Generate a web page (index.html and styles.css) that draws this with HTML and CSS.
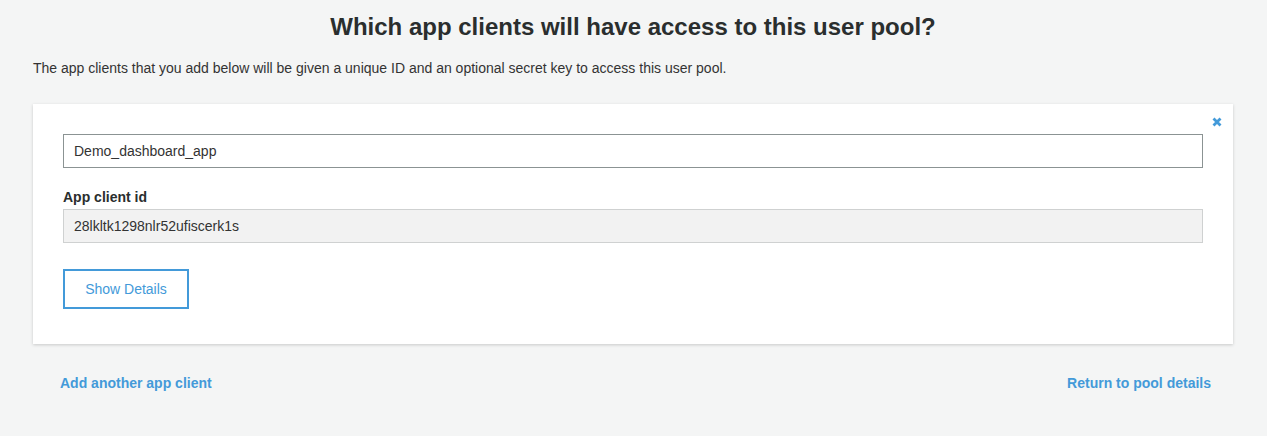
FILE: index.html
```html
<!DOCTYPE html>
<html>
<head>
<meta charset="utf-8">
<link rel="stylesheet" href="styles.css">
</head>
<body>
<div class="page">
  <h1 class="title">Which app clients will have access to this user pool?</h1>
  <p class="intro">The app clients that you add below will be given a unique ID and an optional secret key to access this user pool.</p>
  <div class="card">
    <button class="close" aria-label="Remove">
      <svg width="10" height="10" viewBox="0 0 10 10"><path d="M1.5 1.5 L8.5 8.5 M8.5 1.5 L1.5 8.5" stroke="#439ad9" stroke-width="2.8" stroke-linecap="butt"/></svg>
    </button>
    <input class="field" type="text" value="Demo_dashboard_app">
    <label class="label">App client id</label>
    <input class="field readonly" type="text" value="28lkltk1298nlr52ufiscerk1s" readonly>
    <button class="btn">Show Details</button>
  </div>
  <div class="links">
    <a class="link" href="#">Add another app client</a>
    <a class="link" href="#">Return to pool details</a>
  </div>
</div>
</body>
</html>
```
FILE: styles.css
```css
html, body {
  margin: 0;
  padding: 0;
  background: #f4f5f5;
  font-family: "Liberation Sans", Arial, sans-serif;
  color: #333;
}
.page {
  padding: 0 34px 0 33px;
}
.title {
  margin: 0;
  padding-top: 13px;
  text-align: center;
  font-size: 24px;
  line-height: 28px;
  font-weight: bold;
  color: #2a2e2e;
}
.intro {
  margin: 19px 0 0;
  font-size: 14px;
  line-height: 16px;
  color: #333;
}
.card {
  position: relative;
  margin-top: 28px;
  background: #fff;
  box-shadow: 0 1px 3px rgba(0,0,0,0.18);
  padding: 30px 30px 35px;
  display: flex;
  flex-direction: column;
  align-items: flex-start;
}
.close {
  position: absolute;
  top: 13px;
  right: 11px;
  border: 0;
  background: none;
  padding: 0;
  width: 10px;
  height: 10px;
  cursor: pointer;
}
.close svg { display: block; }
.field {
  box-sizing: border-box;
  width: 100%;
  height: 34px;
  margin: 0;
  border: 1px solid #8b9393;
  padding: 0 10px;
  font-family: "Liberation Sans", Arial, sans-serif;
  font-size: 14px;
  color: #333;
  background: #fff;
  outline: none;
}
.field.readonly {
  background: #f2f2f2;
  border-color: #cfd1d1;
}
.label {
  margin-top: 21px;
  margin-bottom: 4px;
  font-size: 14px;
  line-height: 16px;
  font-weight: bold;
  color: #2a2e2e;
}
.btn {
  margin-top: 26px;
  box-sizing: border-box;
  width: 126px;
  height: 40px;
  border: 2px solid #439ad9;
  background: #fff;
  color: #439ad9;
  font-family: "Liberation Sans", Arial, sans-serif;
  font-size: 14px;
  padding: 0;
  cursor: pointer;
}
.links {
  display: flex;
  justify-content: space-between;
  padding: 31px 22px 0 27px;
}
.link {
  font-size: 14px;
  line-height: 16px;
  font-weight: bold;
  color: #439ad9;
  text-decoration: none;
}
```
